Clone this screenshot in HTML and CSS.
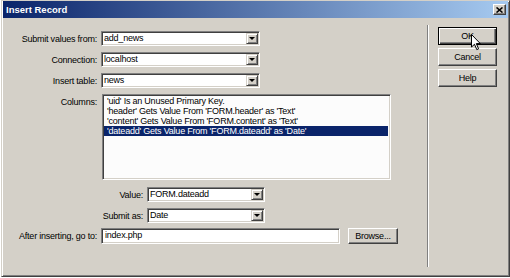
FILE: index.html
```html
<!DOCTYPE html>
<html lang="en">
<head>
    <meta charset="UTF-8">
    <title>Insert Record</title>
    <link rel="stylesheet" href="styles.css">
</head>
<body>
    <div class="dialog">
        <div class="titlebar">
            <span class="title">Insert Record</span>
            <span class="close">
                <svg width="7" height="6" viewBox="0 0 7 6"><path d="M0.5 0.5 L6.5 5.5 M6.5 0.5 L0.5 5.5" stroke="#000" stroke-width="1.6"/></svg>
            </span>
        </div>

        <div class="content">
            <div class="form">
                <div class="row">
                    <label class="lbl">Submit values from:</label>
                    <div class="select wide"><span class="val">add_news</span><span class="arrow"></span></div>
                </div>
                <div class="row">
                    <label class="lbl">Connection:</label>
                    <div class="select wide"><span class="val">localhost</span><span class="arrow"></span></div>
                </div>
                <div class="row">
                    <label class="lbl">Insert table:</label>
                    <div class="select wide"><span class="val">news</span><span class="arrow"></span></div>
                </div>
                <div class="row list-row">
                    <label class="lbl">Columns:</label>
                    <div class="listbox">
                        <div class="item">'uid' Is an Unused Primary Key.</div>
                        <div class="item">'header' Gets Value From 'FORM.header' as 'Text'</div>
                        <div class="item">'content' Gets Value From 'FORM.content' as 'Text'</div>
                        <div class="item selected">'dateadd' Gets Value From 'FORM.dateadd' as 'Date'</div>
                    </div>
                </div>
                <div class="row sub first-sub">
                    <label class="lbl">Value:</label>
                    <div class="select narrow"><span class="val">FORM.dateadd</span><span class="arrow"></span></div>
                </div>
                <div class="row sub">
                    <label class="lbl">Submit as:</label>
                    <div class="select narrow"><span class="val">Date</span><span class="arrow"></span></div>
                </div>
                <div class="row after-row">
                    <label class="lbl">After inserting, go to:</label>
                    <div class="textbox">index.php</div>
                    <button class="btn browse">Browse...</button>
                </div>
            </div>

            <div class="sep"></div>

            <div class="buttons">
                <button class="btn default">OK</button>
                <button class="btn">Cancel</button>
                <button class="btn">Help</button>
            </div>
        </div>

        <!-- mouse pointer resting on the OK button -->
        <svg class="cursor" width="11" height="17" viewBox="0 0 11 17">
            <path d="M0.5 0.5 L0.5 13 L3.5 10.3 L5.8 15.6 L7.6 14.8 L5.3 9.6 L9.3 9.6 Z" fill="#fff" stroke="#000" stroke-width="1"/>
        </svg>
    </div>
</body>
</html>
```

FILE: styles.css
```css
body {
    margin: 0;
    background: #ffffff;
    font-family: "Liberation Sans", Arial, sans-serif;
    font-size: 9px;
    letter-spacing: -0.22px;
    color: #000;
}
.dialog {
    position: relative;
    margin-left: 1px;
    width: 509px;
    height: 277px;
    box-sizing: border-box;
    padding: 0 1px 1px 1px;
    background: #d4d0c8;
    border: 1px solid;
    border-color: #d4d0c8 #404040 #404040 #d4d0c8;
    box-shadow: inset 1px 1px #fff, inset -1px -1px #808080;
}
.titlebar {
    height: 17px;
    display: flex;
    align-items: center;
    justify-content: space-between;
    background: linear-gradient(to right, #0a246a, #a6caf0);
}
.title {
    color: #fff;
    font-weight: bold;
    font-size: 9.5px;
    letter-spacing: 0;
    padding-left: 3px;
}
.close {
    width: 13px;
    height: 11px;
    margin-right: 2px;
    box-sizing: border-box;
    display: flex;
    align-items: center;
    justify-content: center;
    background: #d4d0c8;
    border: 1px solid;
    border-color: #fff #404040 #404040 #fff;
    box-shadow: inset -1px -1px #808080;
}
.content {
    display: flex;
}
.form {
    width: 424px;
    padding-top: 13px;
}
.row {
    display: flex;
    align-items: center;
    gap: 4px;
    margin-bottom: 6px;
}
.lbl {
    width: 94px;
    text-align: right;
    white-space: nowrap;
}
.sub .lbl {
    width: 140px;
}
.first-sub {
    margin-top: 7px;
}
.select {
    height: 15px;
    box-sizing: border-box;
    display: flex;
    background: #fff;
    border: 1px solid;
    border-color: #808080 #fff #fff #808080;
    box-shadow: inset 1px 1px #404040, inset -1px -1px #d4d0c8;
    padding: 1px;
}
.select.wide {
    width: 159px;
}
.select.narrow {
    width: 118px;
}
.val {
    flex: 1;
    padding-left: 1px;
    line-height: 11px;
    white-space: nowrap;
}
.arrow {
    width: 12px;
    box-sizing: border-box;
    display: flex;
    align-items: center;
    justify-content: center;
    background: #d4d0c8;
    border: 1px solid;
    border-color: #d4d0c8 #404040 #404040 #d4d0c8;
    box-shadow: inset 1px 1px #fff, inset -1px -1px #808080;
}
.arrow::after {
    content: "";
    border-left: 3px solid transparent;
    border-right: 3px solid transparent;
    border-top: 3px solid #000;
}
.list-row {
    align-items: flex-start;
    margin-bottom: 0;
}
.list-row .lbl {
    padding-top: 3px;
    line-height: 10px;
}
.listbox {
    width: 289px;
    height: 86px;
    margin-left: 1px;
    box-sizing: border-box;
    padding: 1px 0;
    background: #fcfcfc;
    border: 1px solid;
    border-color: #808080 #fff #fff #808080;
    box-shadow: inset 1px 1px #404040, inset -1px -1px #d4d0c8;
}
.item {
    line-height: 10px;
    padding-left: 3px;
    margin: 0 2px 0 1px;
    white-space: nowrap;
}
.item.selected {
    background: #0a246a;
    color: #fff;
}
.after-row {
    margin-top: -1px;
}
.textbox {
    width: 239px;
    height: 16px;
    box-sizing: border-box;
    padding: 0 3px;
    line-height: 12px;
    background: #fff;
    border: 1px solid;
    border-color: #808080 #fff #fff #808080;
    box-shadow: inset 1px 1px #404040, inset -1px -1px #d4d0c8;
}
.btn {
    font-family: inherit;
    font-size: 9px;
    letter-spacing: -0.22px;
    color: #000;
    padding: 0;
    width: 59px;
    height: 18px;
    background: #d4d0c8;
    border: 1px solid;
    border-color: #fff #404040 #404040 #fff;
    box-shadow: inset -1px -1px #808080;
}
.btn.default {
    border-color: #000;
    box-shadow: inset 1px 1px #fff, inset -1px -1px #404040, inset -2px -2px #808080;
}
.browse {
    width: 50px;
    height: 16px;
    margin-left: 4px;
}
.sep {
    width: 1px;
    margin-top: 7px;
    height: 242px;
    background: #808080;
    border-right: 1px solid #fff;
}
.buttons {
    display: flex;
    flex-direction: column;
    gap: 3px;
    padding: 9px 0 0 9px;
}
.cursor {
    position: absolute;
    left: 469px;
    top: 33px;
}
```
